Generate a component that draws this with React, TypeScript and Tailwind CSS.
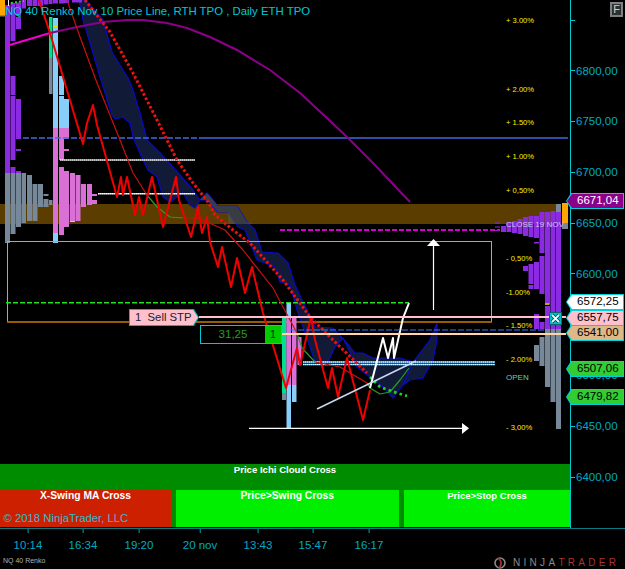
const PURPLE = "#8a2be2";
const GRAY = "#778899";
const ORCHID = "#da70d6";
const SKY = "#87cefa";
const MINT = "#00e08c";

type Bar = [number, number, number, number, string];

const leftBars: Bar[] = [
  [0, 5, 0, 15, "#ffa500"], [0, 5, 15, 16.5, GRAY],
  [5, 5, 5, 173, PURPLE], [5, 5, 173, 243, GRAY],
  [10.5, 5, 3, 41, PURPLE], [10.5, 5, 76, 95, PURPLE], [10.5, 5, 96, 160, PURPLE], [10.5, 5, 167, 173, PURPLE], [10.5, 5, 173, 234, GRAY],
  [16, 5, 2.5, 16, PURPLE], [16, 5, 17, 29, PURPLE], [16, 5, 99, 139, PURPLE], [16, 5, 149, 151, PURPLE], [16, 5, 171, 173, PURPLE], [16, 5, 173, 227, GRAY],
  [21.5, 4.5, 0, 8.5, PURPLE], [21.5, 4.5, 173, 223, GRAY],
  [27, 5, 0, 6, PURPLE], [27, 5, 175, 221, GRAY],
  [32.5, 5, 0, 6, PURPLE], [32.5, 5, 184, 221, GRAY],
  [38, 5, 0, 6, PURPLE], [38, 5, 184, 207, GRAY],
  [43.5, 5, 0, 4.5, PURPLE], [43.5, 5, 194, 196, GRAY], [43.5, 5, 199, 207, GRAY],
  [49, 3.5, 0, 4, PURPLE], [49, 3.5, 17, 58, MINT], [49, 3.5, 58, 94, GRAY], [49, 3.5, 200, 205, GRAY],
  [53, 5, 0, 3.5, PURPLE], [53, 5, 18, 128, SKY], [53, 5, 128, 233, ORCHID], [53, 5, 233, 243, SKY],
  [59, 5, 0, 3.5, PURPLE], [59, 5, 76, 95, SKY], [59, 5, 96, 128, SKY], [59, 5, 128, 160, ORCHID], [59, 5, 167, 235, ORCHID],
  [64, 5, 0, 3, PURPLE], [64, 5, 99, 128, SKY], [64, 5, 128, 139, ORCHID], [64, 5, 149, 151, ORCHID], [64, 5, 171, 227, ORCHID],
  [70, 5, 173, 222, ORCHID], [72, 10, 0, 2.5, PURPLE],
  [75.5, 5, 175, 221, ORCHID],
  [81, 5, 184, 207, ORCHID], [87, 5, 184, 205, ORCHID],
  [92, 5, 194, 196, ORCHID], [92, 5, 200, 204, ORCHID],
  [8, 1, 0, 6, "#f4f4f4"],
];

const rightBars: Bar[] = [
  [556, 5, 204, 212, GRAY], [556, 5, 212, 329, PURPLE], [556, 5, 329, 429, GRAY],
  [550.5, 5, 211, 329, PURPLE], [550.5, 5, 329, 402, GRAY],
  [545, 5, 212, 304, PURPLE], [545, 5, 306, 329, PURPLE], [545, 5, 329, 387, GRAY],
  [539.5, 5, 212, 253, PURPLE], [539.5, 5, 256, 294, PURPLE], [539.5, 5, 322, 329, PURPLE], [539.5, 5, 337, 366, GRAY],
  [534, 5, 216, 238, PURPLE], [534, 5, 242, 243.5, PURPLE], [534, 5, 262, 289, PURPLE], [534, 5, 314, 329, PURPLE], [534, 5, 345, 361, GRAY],
  [528.5, 5, 216, 237, PURPLE], [528.5, 5, 264, 284, PURPLE], [528.5, 5, 285, 289, PURPLE],
  [523, 5, 217, 236, PURPLE], [523, 5, 266, 271, PURPLE],
  [517.5, 5, 219, 234, PURPLE], [512, 5, 221, 233, PURPLE], [506.5, 5, 222, 232, PURPLE], [501, 5, 226, 232, PURPLE],
  [495, 5, 222.5, 223.5, PURPLE], [495, 5, 226.5, 227.5, PURPLE], [495, 5, 230, 231, PURPLE],
  [562, 6, 203, 223, "#ffa500"], [562, 6, 223, 229, GRAY],
  [545, 4.5, 303, 305, "#b8b000"],
];

const midBars: Bar[] = [
  [282, 4, 318, 393, MINT], [282, 4, 393, 400, GRAY],
  [286.5, 4.5, 303, 385, SKY], [286.5, 4.5, 318, 385, ORCHID], [286.5, 4.5, 385, 428, SKY],
  [292, 4.5, 318, 385, ORCHID], [292, 4.5, 385, 402, SKY],
  [297.5, 4, 337, 365, ORCHID],
];

const cloud =
  "79,0 83,20 90,43 100,77 112,115 115,119 123,117 130,123 133,137 143,160 148,170 157,177 163,197 170,202 177,197 183,193 190,205 195,208 200,200 207,200 218,212 228,212 238,227 245,230 257,260 275,267 280,282 290,285 298,313 307,338 315,362 328,362 335,347 343,338 357,367 370,377 383,387 393,398 403,385 413,362 430,340 437,323 437,340 433,360 423,378 410,380 403,385 413,362 400,358 390,358 373,358 363,353 355,353 347,343 333,328 315,327 303,302 295,285 288,263 278,253 262,252 255,230 247,222 237,206 218,206 207,193 200,200 193,190 187,183 173,167 160,153 147,140 140,113 132,87 128,78 112,52 103,20 88,3 85,0";
const redZig =
  "39,0 50,33 83,144 87,123 93,105 97,125 117,197 121,177 123,195 127,177 135,215 139,197 143,215 152,177 163,227 176,177 179,200 191,237 198,207 202,233 207,217 210,242 218,267 222,247 231,287 237,258 245,293 252,267 263,313 286,388 297,348 300,365 311,317 315,340 328,388 332,368 338,397 347,358 363,420 370,390";
const whiteZig = "370,388 383,338 388,358 393,338 394,358 403,318 409,303";
const purpleCurve =
  "50,33 77,27 103,22 127,20 143,20 167,23 187,28 210,37 237,50 270,70 300,93 327,118 347,137 373,163 410,202";
const thinRedA = "67,0 80,37 97,83 120,140 133,173 147,195";
const thinRedB = "183,218 197,218 207,222 225,230 243,250 273,288 283,307 297,333";
const thinRedC = "315,362 340,367 367,383";
const thinGreenA = "147,195 157,207 170,217 183,218";
const thinGreenB = "297,333 302,348 315,362";
const thinGreenC = "367,383 370,388 380,394 390,392 400,380 409,368";
const redDots =
  "85,0 110,32 133,73 157,120 177,160 193,183 208,202 215,215 233,230 250,243 283,280 310,317 333,340 367,373";
const greenDots = "370,377 380,387 397,393 407,396";

const rects = (list: Bar[]) =>
  list.map(([x, w, a, b, c], i) => <rect key={i} x={x} y={a} width={w} height={b - a} fill={c} />);

const xTicks: [number, string][] = [
  [28, "10:14"], [83, "16:34"], [139, "19:20"], [200, "20 nov"], [258, "13:43"], [313, "15:47"], [369, "16:17"],
];

const pct: [number, string][] = [
  [21, "+ 3.00%"], [89.5, "+ 2.00%"], [123, "+ 1.50%"], [157, "+ 1.00%"], [191, "+ 0,50%"],
  [258.5, "- 0,50%"], [293, "-1.00%"], [326, "- 1.50%"], [360, "- 2.00%"], [427.5, "- 3,00%"],
];

const axisTicks = ["", "6800,00", "6750,00", "6700,00", "6650,00", "6600,00", "", "6500,00", "6450,00", "6400,00"];

const tags: [number, string, string, string][] = [
  [193, "6671,04", "bg-[#8b008b]", "text-white"],
  [294, "6572,25", "bg-white", "text-black"],
  [310, "6557,75", "bg-[#ffc0cb]", "text-black"],
  [325, "6541,00", "bg-[#deb887]", "text-black"],
  [361, "6507,06", "bg-[#32cd32]", "text-black"],
  [389, "6479,82", "bg-[#32cd32]", "text-black"],
];

function Chart() {
  return (
    <svg className="absolute left-0 top-0" width="570" height="528" viewBox="0 0 570 528">
      <rect x="0" y="204" width="558" height="20" fill="#5c3d00" />
      <polygon points={cloud} fill="#111b38" stroke="#0a0ac8" strokeWidth="1.2" strokeLinejoin="round" />
      <polygon points="200,200 207,193 218,206 237,206 247,222 253,224 228,224 228,212 218,212 207,200" fill="#5a5a4a" fillOpacity="0.55" />
      {rects(leftBars)}
      {rects(rightBars)}
      <rect x="53" y="26" width="4" height="1" fill="#e8e800" />
      <rect x="70" y="221" width="5" height="1" fill="#e8e800" />
      <polyline points="11,3 24,1" fill="none" stroke="#30d030" strokeWidth="2" strokeDasharray="2 2" />
      <line x1="23" y1="138" x2="200" y2="138" stroke="#4169e1" strokeWidth="1.6" strokeDasharray="6 2" />
      <line x1="200" y1="138" x2="568" y2="138" stroke="#4169e1" strokeWidth="1.6" />
      <line x1="280" y1="230" x2="500" y2="230" stroke="#d000d0" strokeWidth="2" strokeDasharray="5 2" />
      <polyline points="8,45.5 50,33" fill="none" stroke="#f000d0" strokeWidth="2" />
      <polyline points={purpleCurve} fill="none" stroke="#8b008b" strokeWidth="2" />
      <rect x="7.5" y="241.5" width="484" height="80.5" fill="none" stroke="#e8a020" strokeWidth="1" />
      <line x1="7" y1="322" x2="492" y2="322" stroke="#a06000" strokeWidth="1.5" />
      <line x1="6" y1="302.7" x2="409" y2="302.7" stroke="#22e022" strokeWidth="1.5" strokeDasharray="5 2" />
      <g fill="none">
        <line x1="60" y1="160" x2="195" y2="160" stroke="#fff" strokeWidth="1.6" strokeDasharray="1 1" />
        <line x1="61" y1="160" x2="195" y2="160" stroke="#87cefa" strokeWidth="1.6" strokeDasharray="1 1" />
        <line x1="98" y1="193.7" x2="195" y2="193.7" stroke="#fff" strokeWidth="1.6" strokeDasharray="1 1" />
        <line x1="99" y1="193.7" x2="195" y2="193.7" stroke="#ffc0cb" strokeWidth="1.6" strokeDasharray="1 1" />
        <line x1="303" y1="362" x2="495" y2="362" stroke="#fff" strokeWidth="1.6" strokeDasharray="1 1" />
        <line x1="304" y1="362" x2="495" y2="362" stroke="#87cefa" strokeWidth="1.6" strokeDasharray="1 1" />
        <line x1="303" y1="364.5" x2="495" y2="364.5" stroke="#fff" strokeWidth="1.6" strokeDasharray="1 1" />
        <line x1="304" y1="364.5" x2="495" y2="364.5" stroke="#87cefa" strokeWidth="1.6" strokeDasharray="1 1" />
      </g>
      {rects(midBars)}
      <g fill="none" strokeLinejoin="round">
        <polyline points={thinRedA} stroke="#c81010" strokeWidth="1.2" />
        <polyline points={thinRedB} stroke="#c81010" strokeWidth="1.2" />
        <polyline points={thinRedC} stroke="#c81010" strokeWidth="1.2" />
        <polyline points={thinGreenA} stroke="#2a9a2a" strokeWidth="1.2" />
        <polyline points={thinGreenB} stroke="#2a9a2a" strokeWidth="1.2" />
        <polyline points={thinGreenC} stroke="#2a9a2a" strokeWidth="1.2" />
        <polyline points={redDots} stroke="#f01010" strokeWidth="3" strokeDasharray="2.6 2.2" />
        <polyline points={greenDots} stroke="#20d020" strokeWidth="2.8" strokeDasharray="2.6 3.2" />
        <polyline points={redZig} stroke="#f00000" strokeWidth="2" />
        <polyline points={whiteZig} stroke="#fff" strokeWidth="2" />
      </g>
      <line x1="317" y1="409" x2="416" y2="361" stroke="#c8d8ee" strokeWidth="1.5" />
      <line x1="199" y1="317" x2="566" y2="317" stroke="#ffc0cb" strokeWidth="2.2" />
      <line x1="290" y1="330" x2="546" y2="330" stroke="#3a78ff" strokeWidth="1.2" strokeDasharray="6 2" />
      <line x1="282" y1="334" x2="566" y2="334" stroke="#ffd5a8" strokeWidth="2.2" />
      <line x1="249" y1="428.3" x2="463" y2="428.3" stroke="#fff" strokeWidth="1.2" />
      <polygon points="462,423 469,428.3 462,434" fill="#fff" />
      <line x1="433.5" y1="310" x2="433.5" y2="245" stroke="#fff" strokeWidth="1.2" />
      <polygon points="427,246 433.5,239 440,246" fill="#fff" />
    </svg>
  );
}

function Tag({ y, text, bg, color }: { y: number; text: string; bg: string; color: string }) {
  return (
    <div
      className="absolute left-[566px] w-[58px] h-[16px] bg-[#00d0d8] [clip-path:polygon(5px_0,100%_0,100%_100%,5px_100%,0_50%)]"
      style={{ top: y }}
    >
      <div
        className={`absolute inset-[1px] pl-[10px] flex items-center text-[11.5px] ${bg} ${color} [clip-path:polygon(5px_0,100%_0,100%_100%,5px_100%,0_50%)]`}
      >
        {text}
      </div>
    </div>
  );
}

export default function App() {
  return (
    <div className="relative w-[625px] h-[569px] bg-black overflow-hidden font-['Liberation_Sans',Arial,sans-serif]">
      <div className="flex h-[528px]">
        <div className="relative w-[570px] h-full flex flex-col justify-end pb-[1px]">
          <Chart />
          <div className="relative h-[26px] bg-[#008c00] text-center text-white font-bold text-[9.6px] leading-[11px]">
            Price Ichi Cloud Cross
          </div>
          <div className="relative h-[37px] flex bg-[#008c00] text-center text-white font-bold leading-[12px]">
            <div className="w-[171px] bg-[#cc2000] text-[10.3px]">X-Swing MA Cross</div>
            <div className="ml-[4.5px] w-[223.5px] bg-[#00ee00] text-[10.3px]">Price&gt;Swing Cross</div>
            <div className="ml-[5px] flex-1 bg-[#00ee00] text-[9.5px]">Price&gt;Stop Cross</div>
          </div>
          <div className="absolute left-[3.5px] bottom-[3px] text-[#33bbcc] text-[11.3px] leading-[14px]">© 2018 NinjaTrader, LLC</div>
        </div>
        <div className="w-[55px] h-[528px] border-l-[1.5px] border-[#00c8d0] overflow-hidden">
          <div className="-mt-[5.4px]">
            {axisTicks.map((t, i) => (
              <div key={i} className="h-[50.8px] flex items-center gap-[1px] text-[#00aac0] text-[11.5px]">
                <span className="w-[4px] h-[1px] bg-[#00c8d0]" />
                <span className="mt-[1px]">{t}</span>
              </div>
            ))}
          </div>
        </div>
      </div>

      <div className="relative h-[41px] border-t-[1.5px] border-[#0a7a80]">
        {xTicks.map(([x, t]) => (
          <div key={t} className="absolute top-0 -translate-x-1/2 flex flex-col items-center text-[#00aac0] text-[11.5px]" style={{ left: x }}>
            <span className="w-[1px] h-[4px] bg-[#10a0a8]" />
            <span className="mt-[6px] leading-[13px]">{t}</span>
          </div>
        ))}
        <div className="absolute left-[3px] top-[27px] text-[#b0b0b0] text-[7px] leading-[10px] whitespace-nowrap">NQ 40 Renko</div>
        <div className="absolute left-[493px] top-[27px] flex items-center h-[13px] text-[10px] leading-[12px] tracking-[3.3px] whitespace-nowrap">
          <svg width="14" height="12" viewBox="0 0 14 12" className="mr-[6px]">
            <circle cx="7" cy="6" r="5" fill="none" stroke="#8a8a8a" strokeWidth="1.6" />
            <path d="M5 1 C9 4 9 8 6 11" fill="none" stroke="#a03030" strokeWidth="1.8" />
          </svg>
          <span className="text-[#8a8a8a]">NINJA</span>
          <span className="text-[#a83232]">TRADER</span>
        </div>
      </div>

      <div className="absolute left-[5px] top-[4px] text-[#00c8d8] text-[11.4px] leading-[14px] whitespace-nowrap">
        NQ 40 Renko Nov 10 Price Line, RTH TPO , Daily ETH TPO
      </div>

      <div className="absolute left-[610px] top-[2px] w-[13px] h-[15px] bg-[#303030] border-2 border-[#808080] text-[#d0d0d0] text-[11px] leading-[11px] text-center">F</div>

      {pct.map(([y, t]) => (
        <div key={t} className="absolute left-[506px] -translate-y-1/2 text-[#f4f400] text-[7.6px] leading-[10px] whitespace-nowrap" style={{ top: y }}>{t}</div>
      ))}
      <div className="absolute left-[506px] top-[220px] text-[#d0c0e8] text-[8px] leading-[10px] whitespace-nowrap">CLOSE 19 NOV</div>
      <div className="absolute left-[506px] top-[373px] text-[#70d090] text-[8px] leading-[10px]">OPEN</div>

      <div className="absolute left-[549px] top-[312px] w-[13px] h-[13px] bg-[#00c0c8] border border-[#006a70]">
        <svg width="11" height="11" viewBox="0 0 11 11" className="block">
          <path d="M2 2 L9 9 M9 2 L2 9" stroke="#0a3a50" strokeWidth="3.4" />
          <path d="M2 2 L9 9 M9 2 L2 9" stroke="#e8ffff" strokeWidth="1.8" />
        </svg>
      </div>

      {tags.map(([y, t, bg, c]) => (
        <Tag key={t} y={y} text={t} bg={bg} color={c} />
      ))}

      <div className="absolute left-[129px] top-[309px] w-[70px] h-[17px] bg-[#00b8c0] [clip-path:polygon(0_0,65px_0,100%_50%,65px_100%,0_100%)]">
        <div className="absolute inset-[1px] pl-[5px] flex items-center bg-[#ffc0cb] text-[#202030] text-[11.3px] whitespace-pre [clip-path:polygon(0_0,63px_0,100%_50%,63px_100%,0_100%)]">
          1  Sell STP
        </div>
      </div>

      <div className="absolute left-[200px] top-[325px] w-[82px] h-[19px] flex border border-[#00c8d0] bg-black">
        <div className="flex-1 text-center text-[#22a022] text-[11.5px] leading-[17px]">31,25</div>
        <div className="w-[16px] bg-[#00cc00] text-center text-[#103010] text-[11.5px] leading-[17px]">1</div>
      </div>
    </div>
  );
}
